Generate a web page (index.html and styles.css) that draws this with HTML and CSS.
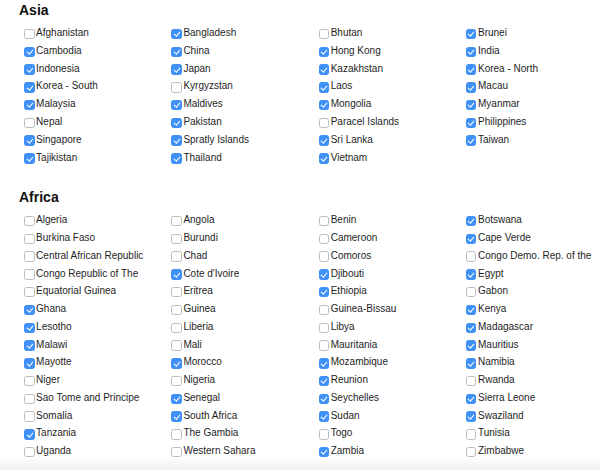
FILE: index.html
```html
<!DOCTYPE html>
<html>
<head>
<meta charset="utf-8">
<link rel="stylesheet" href="styles.css">
</head>
<body>
<section class="region">
  <h2 class="title">Asia</h2>
  <div class="grid">
    <label class="item"><span class="box"></span>Afghanistan</label>
    <label class="item"><span class="box on"></span>Bangladesh</label>
    <label class="item"><span class="box"></span>Bhutan</label>
    <label class="item"><span class="box on"></span>Brunei</label>
    <label class="item"><span class="box on"></span>Cambodia</label>
    <label class="item"><span class="box on"></span>China</label>
    <label class="item"><span class="box on"></span>Hong Kong</label>
    <label class="item"><span class="box on"></span>India</label>
    <label class="item"><span class="box on"></span>Indonesia</label>
    <label class="item"><span class="box on"></span>Japan</label>
    <label class="item"><span class="box on"></span>Kazakhstan</label>
    <label class="item"><span class="box on"></span>Korea - North</label>
    <label class="item"><span class="box on"></span>Korea - South</label>
    <label class="item"><span class="box"></span>Kyrgyzstan</label>
    <label class="item"><span class="box on"></span>Laos</label>
    <label class="item"><span class="box on"></span>Macau</label>
    <label class="item"><span class="box on"></span>Malaysia</label>
    <label class="item"><span class="box on"></span>Maldives</label>
    <label class="item"><span class="box on"></span>Mongolia</label>
    <label class="item"><span class="box on"></span>Myanmar</label>
    <label class="item"><span class="box"></span>Nepal</label>
    <label class="item"><span class="box on"></span>Pakistan</label>
    <label class="item"><span class="box"></span>Paracel Islands</label>
    <label class="item"><span class="box on"></span>Philippines</label>
    <label class="item"><span class="box on"></span>Singapore</label>
    <label class="item"><span class="box on"></span>Spratly Islands</label>
    <label class="item"><span class="box on"></span>Sri Lanka</label>
    <label class="item"><span class="box on"></span>Taiwan</label>
    <label class="item"><span class="box on"></span>Tajikistan</label>
    <label class="item"><span class="box on"></span>Thailand</label>
    <label class="item"><span class="box on"></span>Vietnam</label>
  </div>
</section>
<section class="region">
  <h2 class="title">Africa</h2>
  <div class="grid">
    <label class="item"><span class="box"></span>Algeria</label>
    <label class="item"><span class="box"></span>Angola</label>
    <label class="item"><span class="box"></span>Benin</label>
    <label class="item"><span class="box on"></span>Botswana</label>
    <label class="item"><span class="box"></span>Burkina Faso</label>
    <label class="item"><span class="box"></span>Burundi</label>
    <label class="item"><span class="box"></span>Cameroon</label>
    <label class="item"><span class="box on"></span>Cape Verde</label>
    <label class="item"><span class="box"></span>Central African Republic</label>
    <label class="item"><span class="box"></span>Chad</label>
    <label class="item"><span class="box"></span>Comoros</label>
    <label class="item"><span class="box"></span>Congo Demo. Rep. of the</label>
    <label class="item"><span class="box"></span>Congo Republic of The</label>
    <label class="item"><span class="box on"></span>Cote d'Ivoire</label>
    <label class="item"><span class="box on"></span>Djibouti</label>
    <label class="item"><span class="box on"></span>Egypt</label>
    <label class="item"><span class="box"></span>Equatorial Guinea</label>
    <label class="item"><span class="box"></span>Eritrea</label>
    <label class="item"><span class="box on"></span>Ethiopia</label>
    <label class="item"><span class="box"></span>Gabon</label>
    <label class="item"><span class="box on"></span>Ghana</label>
    <label class="item"><span class="box"></span>Guinea</label>
    <label class="item"><span class="box"></span>Guinea-Bissau</label>
    <label class="item"><span class="box on"></span>Kenya</label>
    <label class="item"><span class="box on"></span>Lesotho</label>
    <label class="item"><span class="box"></span>Liberia</label>
    <label class="item"><span class="box"></span>Libya</label>
    <label class="item"><span class="box on"></span>Madagascar</label>
    <label class="item"><span class="box on"></span>Malawi</label>
    <label class="item"><span class="box"></span>Mali</label>
    <label class="item"><span class="box"></span>Mauritania</label>
    <label class="item"><span class="box on"></span>Mauritius</label>
    <label class="item"><span class="box on"></span>Mayotte</label>
    <label class="item"><span class="box on"></span>Morocco</label>
    <label class="item"><span class="box on"></span>Mozambique</label>
    <label class="item"><span class="box on"></span>Namibia</label>
    <label class="item"><span class="box"></span>Niger</label>
    <label class="item"><span class="box"></span>Nigeria</label>
    <label class="item"><span class="box on"></span>Reunion</label>
    <label class="item"><span class="box"></span>Rwanda</label>
    <label class="item"><span class="box"></span>Sao Tome and Principe</label>
    <label class="item"><span class="box on"></span>Senegal</label>
    <label class="item"><span class="box on"></span>Seychelles</label>
    <label class="item"><span class="box on"></span>Sierra Leone</label>
    <label class="item"><span class="box"></span>Somalia</label>
    <label class="item"><span class="box on"></span>South Africa</label>
    <label class="item"><span class="box on"></span>Sudan</label>
    <label class="item"><span class="box on"></span>Swaziland</label>
    <label class="item"><span class="box on"></span>Tanzania</label>
    <label class="item"><span class="box"></span>The Gambia</label>
    <label class="item"><span class="box"></span>Togo</label>
    <label class="item"><span class="box"></span>Tunisia</label>
    <label class="item"><span class="box"></span>Uganda</label>
    <label class="item"><span class="box"></span>Western Sahara</label>
    <label class="item"><span class="box on"></span>Zambia</label>
    <label class="item"><span class="box"></span>Zimbabwe</label>
  </div>
</section>
</body>
</html>
```
FILE: styles.css
```css
html {
  height: 100%;
}
body {
  margin: 0;
  min-height: 100%;
  overflow: hidden;
  font-family: "Liberation Sans", Arial, Helvetica, sans-serif;
  color: #1e1e1e;
  background: linear-gradient(to bottom, #ffffff 0, #ffffff 456px, #f0f0f0 470px);
}
.region {
  padding-top: 2px;
}
.region + .region {
  margin-top: 20.8px;
}
.title {
  margin: 0 0 6.15px 19px;
  font-size: 14px;
  line-height: 16px;
  font-weight: bold;
  color: #111;
}
.grid {
  display: grid;
  grid-template-columns: repeat(4, 147.3px);
  grid-auto-rows: 17.77px;
  padding-left: 24px;
}
.item {
  display: flex;
  align-items: center;
  font-size: 10px;
  line-height: 17.77px;
  white-space: nowrap;
}
.box {
  flex: none;
  box-sizing: border-box;
  width: 10.5px;
  height: 10.5px;
  margin: 2.2px 1.6px 0 0;
  border: 1px solid #bcbcbc;
  border-radius: 2.5px;
  background: #fff;
  display: flex;
  align-items: center;
  justify-content: center;
}
.box.on {
  border-color: #3d8ef5;
  background: #3f91f7;
}
.box.on::after {
  content: "";
  width: 2.5px;
  height: 5px;
  margin-top: -1.5px;
  border-right: 1.3px solid #fff;
  border-bottom: 1.3px solid #fff;
  transform: rotate(40deg);
}
```
